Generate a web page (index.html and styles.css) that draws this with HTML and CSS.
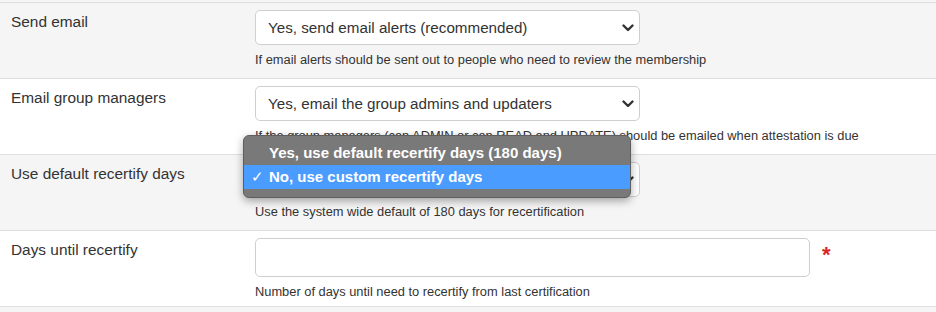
FILE: index.html
```html
<!DOCTYPE html>
<html>
<head>
<meta charset="utf-8">
<link rel="stylesheet" href="styles.css">
</head>
<body>
<div class="form">
  <div class="row alt">
    <div class="label">Send email</div>
    <div class="control">
      <div class="select"><span>Yes, send email alerts (recommended)</span>
        <svg class="chev" width="12" height="8" viewBox="0 0 12 8"><path d="M1.5 1.5 L6 6 L10.5 1.5" fill="none" stroke="#333" stroke-width="2.4" stroke-linecap="round" stroke-linejoin="round"/></svg>
      </div>
      <div class="help">If email alerts should be sent out to people who need to review the membership</div>
    </div>
  </div>
  <div class="row">
    <div class="label">Email group managers</div>
    <div class="control">
      <div class="select"><span>Yes, email the group admins and updaters</span>
        <svg class="chev" width="12" height="8" viewBox="0 0 12 8"><path d="M1.5 1.5 L6 6 L10.5 1.5" fill="none" stroke="#333" stroke-width="2.4" stroke-linecap="round" stroke-linejoin="round"/></svg>
      </div>
      <div class="help">If the group managers (can ADMIN or can READ and UPDATE) should be emailed when attestation is due</div>
    </div>
  </div>
  <div class="row alt">
    <div class="label">Use default recertify days</div>
    <div class="control">
      <div class="select anchor"><span>No, use custom recertify days</span>
        <svg class="chev" width="12" height="8" viewBox="0 0 12 8"><path d="M1.5 1.5 L6 6 L10.5 1.5" fill="none" stroke="#333" stroke-width="2.4" stroke-linecap="round" stroke-linejoin="round"/></svg>
        <div class="popup">
          <div class="opt">Yes, use default recertify days (180 days)</div>
          <div class="opt sel"><span class="check">✓</span>No, use custom recertify days</div>
        </div>
      </div>
      <div class="help">Use the system wide default of 180 days for recertification</div>
    </div>
  </div>
  <div class="row">
    <div class="label">Days until recertify</div>
    <div class="control">
      <div class="inputline">
        <div class="input"></div>
        <span class="req">*</span>
      </div>
      <div class="help">Number of days until need to recertify from last certification</div>
    </div>
  </div>
  <div class="row alt tail"></div>
</div>
</body>
</html>
```
FILE: styles.css
```css
html, body {
  margin: 0;
  padding: 0;
  background: #f5f5f5;
  font-family: "Liberation Sans", Arial, sans-serif;
  color: #333;
}
.form {
  padding-top: 2px;
}
.row {
  display: flex;
  background: #fff;
  border-top: 1px solid #dedede;
  height: 76px;
  box-sizing: border-box;
}
.row.alt {
  background: #f5f5f5;
}
.row.tail {
  height: 10px;
}
.label {
  width: 244px;
  padding-left: 11px;
  padding-top: 10px;
  font-size: 15.4px;
  line-height: 18px;
}
.control {
  padding-top: 7px;
}
.select {
  position: relative;
  box-sizing: border-box;
  width: 385px;
  height: 35px;
  border: 1px solid #cfcfcf;
  border-radius: 5px;
  background: #fff;
  display: flex;
  align-items: center;
  justify-content: space-between;
  padding: 0 5px 0 12px;
  font-size: 15.2px;
  color: #333;
}
.chev {
  display: block;
}
.help {
  font-size: 12.85px;
  line-height: 16px;
  margin-top: 7px;
  color: #333;
}
.inputline {
  display: flex;
  align-items: flex-start;
  gap: 12px;
}
.input {
  box-sizing: border-box;
  width: 555px;
  height: 39px;
  border: 1px solid #cfcfcf;
  border-radius: 5px;
  background: #fff;
}
.req {
  color: #d9262c;
  font-size: 22px;
  font-weight: bold;
  line-height: 22px;
  margin-top: 6px;
}
.popup {
  position: absolute;
  left: -13px;
  top: -28px;
  width: 388px;
  box-sizing: border-box;
  background: #797979;
  border: 1px solid #5e5e5e;
  border-radius: 6px;
  padding: 5px 0 8px;
  box-shadow: 0 3px 8px rgba(0,0,0,0.35);
  color: #fff;
  font-size: 15px;
  font-weight: bold;
  z-index: 5;
}
.opt {
  height: 24px;
  line-height: 24px;
  padding-left: 25px;
  position: relative;
  white-space: nowrap;
}
.opt.sel {
  background: #4b9cff;
}
.check {
  position: absolute;
  left: 7px;
  top: 0;
  font-weight: normal;
}
```
